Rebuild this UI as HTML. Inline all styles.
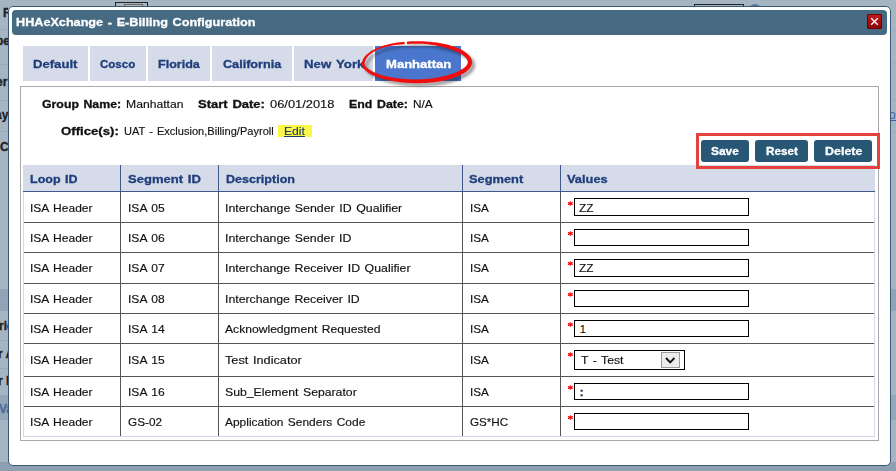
<!DOCTYPE html>
<html><head><meta charset="utf-8"><style>
html,body{margin:0;padding:0}
body{width:896px;height:471px;overflow:hidden;position:relative;background:#a5b5c2;font-family:"Liberation Sans",sans-serif}
.t{position:absolute;white-space:nowrap;transform-origin:0 0}
.b{position:absolute;box-sizing:border-box}
</style></head><body>
<div class="b" style="left:0px;top:289px;width:896px;height:22px;background:#91a3b4"></div>
<div class="b" style="left:0px;top:462px;width:896px;height:9px;background:#8da0b2"></div>
<div class="b" style="left:0px;top:395px;width:896px;height:25px;background:#94a6b7"></div>
<div class="b" style="left:0px;top:29px;width:8px;height:1px;background:#9aabb8"></div>
<div class="b" style="left:0px;top:64px;width:8px;height:1px;background:#9aabb8"></div>
<div class="b" style="left:0px;top:100px;width:8px;height:1px;background:#9aabb8"></div>
<div class="b" style="left:0px;top:131px;width:8px;height:1px;background:#9aabb8"></div>
<div class="b" style="left:0px;top:340px;width:8px;height:1px;background:#9aabb8"></div>
<div class="b" style="left:0px;top:368px;width:8px;height:1px;background:#9aabb8"></div>
<div class="b" style="left:890px;top:30px;width:6px;height:1px;background:#9aabb8"></div>
<div class="b" style="left:890px;top:62px;width:6px;height:1px;background:#9aabb8"></div>
<div class="b" style="left:890px;top:100px;width:6px;height:1px;background:#9aabb8"></div>
<div class="b" style="left:890px;top:131px;width:6px;height:1px;background:#9aabb8"></div>
<div class="b" style="left:115px;top:2px;width:33px;height:5px;border:1px solid #222;background:#a9b5bd;border-bottom:none"></div>
<div class="b" style="left:694px;top:4px;width:50px;height:3px;border:1px solid #222;border-bottom:none"></div>
<div class="b" style="left:750px;top:4px;width:10px;height:6px;border-radius:50%;background:#5d7b98"></div>
<div class="b" style="left:124px;top:4px;width:19px;height:3px;border:1px solid #666;border-bottom:none;background:#b4bcc0"></div>
<div class="b" style="left:0;top:0;width:8px;height:471px;overflow:hidden"><div class="t" style="left:3px;top:5.8px;font-size:12px;line-height:14px;font-weight:bold;color:#222;-webkit-text-stroke:0.35px #222">F</div>
<div class="t" style="left:-4px;top:33.8px;font-size:12px;line-height:14px;font-weight:bold;color:#222;-webkit-text-stroke:0.35px #222">pe</div>
<div class="t" style="left:-4px;top:74.8px;font-size:12px;line-height:14px;font-weight:bold;color:#222;-webkit-text-stroke:0.35px #222">er</div>
<div class="t" style="left:-5px;top:107.8px;font-size:12px;line-height:14px;font-weight:bold;color:#222;-webkit-text-stroke:0.35px #222">ay</div>
<div class="t" style="left:0px;top:139.8px;font-size:12px;line-height:14px;font-weight:bold;color:#222;-webkit-text-stroke:0.35px #222">C</div>
<div class="t" style="left:-1px;top:318.8px;font-size:12px;line-height:14px;font-weight:bold;color:#222;-webkit-text-stroke:0.35px #222">ric</div>
<div class="t" style="left:-2px;top:346.8px;font-size:12px;line-height:14px;font-weight:bold;color:#222;-webkit-text-stroke:0.35px #222">r A</div>
<div class="t" style="left:-2px;top:373.8px;font-size:12px;line-height:14px;font-weight:bold;color:#222;-webkit-text-stroke:0.35px #222">r E</div>
<div class="t" style="left:-1px;top:401.8px;font-size:12px;line-height:14px;font-weight:bold;color:#4d6c9c;-webkit-text-stroke:0.35px #4d6c9c">Va</div>
</div>
<div class="b" style="left:890px;top:0;width:6px;height:471px;overflow:hidden"><div class="t" style="left:-1px;top:107.8px;font-size:12px;line-height:14px;font-weight:normal;color:#3a62a0;-webkit-text-stroke:0px #3a62a0"><u>ol</u></div>
</div>
<div class="b" style="left:8px;top:6px;width:883px;height:460px;border:1px solid #3b5878;background:#fff;border-radius:5px"></div>
<div class="b" style="left:12px;top:10px;width:875px;height:25px;background:#466a82;border-radius:4px"></div>
<div class="t" style="left:16.40px;top:15.69px;font-size:11px;line-height:13px;font-weight:bold;color:#fff;letter-spacing:0px;word-spacing:1.0px;transform:scaleX(1.1491);-webkit-text-stroke:0.3px #fff;">HHAeXchange - E-Billing Configuration</div>
<div class="b" style="left:867px;top:14px;width:15px;height:15px;border-radius:2px;background:linear-gradient(#c41a1a,#8a0606);box-shadow:inset 0 0 0 1px #6a0000"></div>
<svg class="b" style="left:867px;top:14px" width="15" height="15"><path d="M4.2 4.2 L10.8 10.8 M10.8 4.2 L4.2 10.8" stroke="#f2f2f2" stroke-width="1.5"/></svg>
<div class="b" style="left:23px;top:46px;width:65px;height:35px;background:#d5dbe9"></div>
<div class="t" style="left:32.90px;top:57.69px;font-size:11px;line-height:13px;font-weight:bold;color:#1f3e7b;letter-spacing:0px;word-spacing:1.0px;transform:scaleX(1.1910);-webkit-text-stroke:0.3px #1f3e7b;">Default</div>
<div class="b" style="left:90px;top:46px;width:56px;height:35px;background:#d5dbe9"></div>
<div class="t" style="left:99.80px;top:57.69px;font-size:11px;line-height:13px;font-weight:bold;color:#1f3e7b;letter-spacing:0px;word-spacing:1.0px;transform:scaleX(1.0471);-webkit-text-stroke:0.3px #1f3e7b;">Cosco</div>
<div class="b" style="left:148px;top:46px;width:62px;height:35px;background:#d5dbe9"></div>
<div class="t" style="left:158.00px;top:57.69px;font-size:11px;line-height:13px;font-weight:bold;color:#1f3e7b;letter-spacing:0px;word-spacing:1.0px;transform:scaleX(1.1404);-webkit-text-stroke:0.3px #1f3e7b;">Florida</div>
<div class="b" style="left:212px;top:46px;width:80px;height:35px;background:#d5dbe9"></div>
<div class="t" style="left:222.70px;top:57.69px;font-size:11px;line-height:13px;font-weight:bold;color:#1f3e7b;letter-spacing:0px;word-spacing:1.0px;transform:scaleX(1.1474);-webkit-text-stroke:0.3px #1f3e7b;">California</div>
<div class="b" style="left:294px;top:46px;width:79px;height:35px;background:#d5dbe9"></div>
<div class="t" style="left:304.30px;top:57.69px;font-size:11px;line-height:13px;font-weight:bold;color:#1f3e7b;letter-spacing:0px;word-spacing:1.0px;transform:scaleX(1.2067);-webkit-text-stroke:0.3px #1f3e7b;">New York</div>
<div class="b" style="left:375px;top:46px;width:86px;height:35px;background:#4a77cd"></div>
<div class="t" style="left:385.70px;top:57.69px;font-size:11px;line-height:13px;font-weight:bold;color:#fff;letter-spacing:0px;word-spacing:1.0px;transform:scaleX(1.1873);-webkit-text-stroke:0.3px #fff;">Manhattan</div>
<div class="b" style="left:20px;top:86px;width:859px;height:355px;border:1px solid #a8a8a8"></div>
<div class="t" style="left:41.60px;top:97.69px;font-size:11px;line-height:13px;font-weight:bold;color:#111;letter-spacing:0px;word-spacing:1.0px;transform:scaleX(1.1192);-webkit-text-stroke:0.3px #111;">Group Name:</div>
<div class="t" style="left:126.30px;top:97.69px;font-size:11px;line-height:13px;font-weight:normal;color:#111;letter-spacing:0px;word-spacing:1.0px;transform:scaleX(1.1061);-webkit-text-stroke:0.15px #111;">Manhattan</div>
<div class="t" style="left:198.00px;top:97.69px;font-size:11px;line-height:13px;font-weight:bold;color:#111;letter-spacing:0px;word-spacing:1.0px;transform:scaleX(1.1814);-webkit-text-stroke:0.3px #111;">Start Date:</div>
<div class="t" style="left:269.80px;top:97.69px;font-size:11px;line-height:13px;font-weight:normal;color:#111;letter-spacing:0px;word-spacing:1.0px;transform:scaleX(1.1697);-webkit-text-stroke:0.15px #111;">06/01/2018</div>
<div class="t" style="left:348.70px;top:97.69px;font-size:11px;line-height:13px;font-weight:bold;color:#111;letter-spacing:0px;word-spacing:1.0px;transform:scaleX(1.1254);-webkit-text-stroke:0.3px #111;">End Date:</div>
<div class="t" style="left:412.60px;top:97.69px;font-size:11px;line-height:13px;font-weight:normal;color:#111;letter-spacing:0px;word-spacing:1.0px;transform:scaleX(1.0743);-webkit-text-stroke:0.15px #111;">N/A</div>
<div class="t" style="left:61.20px;top:124.69px;font-size:11px;line-height:13px;font-weight:bold;color:#111;letter-spacing:0px;word-spacing:1.0px;transform:scaleX(1.1972);-webkit-text-stroke:0.3px #111;">Office(s):</div>
<div class="b" style="left:278px;top:125px;width:34px;height:12px;background:#fcf84a"></div>
<div class="t" style="left:123.60px;top:124.69px;font-size:11px;line-height:13px;font-weight:normal;color:#111;letter-spacing:0px;word-spacing:1.0px;transform:scaleX(1.0052);-webkit-text-stroke:0.15px #111;">UAT - Exclusion,Billing/Payroll</div>
<div class="t" style="left:284.30px;top:124.69px;font-size:11px;line-height:13px;font-weight:normal;color:#1c3a66;letter-spacing:0px;word-spacing:1.0px;transform:scaleX(1.1027);-webkit-text-stroke:0.15px #1c3a66;text-decoration:underline">Edit</div>
<div class="b" style="left:23px;top:165px;width:852px;height:272px;border:1px solid #d3d9ea"></div>
<div class="b" style="left:23px;top:165px;width:852px;height:26px;background:#d5dbe9"></div>
<div class="b" style="left:23px;top:191px;width:852px;height:1px;background:#3d5a8a"></div>
<div class="b" style="left:120px;top:165px;width:1px;height:26px;background:#3d5a8a"></div>
<div class="b" style="left:120px;top:192px;width:1px;height:244px;background:#555"></div>
<div class="b" style="left:218px;top:165px;width:1px;height:26px;background:#3d5a8a"></div>
<div class="b" style="left:218px;top:192px;width:1px;height:244px;background:#555"></div>
<div class="b" style="left:462px;top:165px;width:1px;height:26px;background:#3d5a8a"></div>
<div class="b" style="left:462px;top:192px;width:1px;height:244px;background:#555"></div>
<div class="b" style="left:560px;top:165px;width:1px;height:26px;background:#3d5a8a"></div>
<div class="b" style="left:560px;top:192px;width:1px;height:244px;background:#555"></div>
<div class="b" style="left:24px;top:222px;width:850px;height:1px;background:#555"></div>
<div class="b" style="left:24px;top:252px;width:850px;height:1px;background:#555"></div>
<div class="b" style="left:24px;top:283px;width:850px;height:1px;background:#555"></div>
<div class="b" style="left:24px;top:313px;width:850px;height:1px;background:#555"></div>
<div class="b" style="left:24px;top:343px;width:850px;height:1px;background:#555"></div>
<div class="b" style="left:24px;top:376px;width:850px;height:1px;background:#555"></div>
<div class="b" style="left:24px;top:406px;width:850px;height:1px;background:#555"></div>
<div class="t" style="left:30.10px;top:172.69px;font-size:11px;line-height:13px;font-weight:bold;color:#1f3e7b;letter-spacing:0px;word-spacing:1.0px;transform:scaleX(1.1352);-webkit-text-stroke:0.3px #1f3e7b;">Loop ID</div>
<div class="t" style="left:127.60px;top:172.69px;font-size:11px;line-height:13px;font-weight:bold;color:#1f3e7b;letter-spacing:0px;word-spacing:1.0px;transform:scaleX(1.1835);-webkit-text-stroke:0.3px #1f3e7b;">Segment ID</div>
<div class="t" style="left:225.80px;top:172.69px;font-size:11px;line-height:13px;font-weight:bold;color:#1f3e7b;letter-spacing:0px;word-spacing:1.0px;transform:scaleX(1.1403);-webkit-text-stroke:0.3px #1f3e7b;">Description</div>
<div class="t" style="left:469.20px;top:172.69px;font-size:11px;line-height:13px;font-weight:bold;color:#1f3e7b;letter-spacing:0px;word-spacing:1.0px;transform:scaleX(1.1668);-webkit-text-stroke:0.3px #1f3e7b;">Segment</div>
<div class="t" style="left:567.30px;top:172.69px;font-size:11px;line-height:13px;font-weight:bold;color:#1f3e7b;letter-spacing:0px;word-spacing:1.0px;transform:scaleX(1.1676);-webkit-text-stroke:0.3px #1f3e7b;">Values</div>
<div class="t" style="left:30.10px;top:201.69px;font-size:11px;line-height:13px;font-weight:normal;color:#111;letter-spacing:0px;word-spacing:1.0px;transform:scaleX(1.0916);-webkit-text-stroke:0.15px #111;">ISA Header</div>
<div class="t" style="left:127.60px;top:201.69px;font-size:11px;line-height:13px;font-weight:normal;color:#111;letter-spacing:0px;word-spacing:1.0px;transform:scaleX(1.0953);-webkit-text-stroke:0.15px #111;">ISA 05</div>
<div class="t" style="left:225.00px;top:201.69px;font-size:11px;line-height:13px;font-weight:normal;color:#111;letter-spacing:0px;word-spacing:1.0px;transform:scaleX(1.1236);-webkit-text-stroke:0.15px #111;">Interchange Sender ID Qualifier</div>
<div class="t" style="left:469.60px;top:201.69px;font-size:11px;line-height:13px;font-weight:normal;color:#111;letter-spacing:0px;word-spacing:1.0px;transform:scaleX(1.0659);-webkit-text-stroke:0.15px #111;">ISA</div>
<svg class="b" style="left:564px;top:200px" width="12" height="8"><path d="M6.4 1.1 V5.9" stroke="#ff5050" stroke-width="1.1"/><path d="M4.6 2.6 L8.2 4.4 M8.2 2.6 L4.6 4.4" stroke="#ff0000" stroke-width="1.3" stroke-linecap="round"/></svg>
<div class="b" style="left:574px;top:198px;width:175px;height:18px;border:1px solid #000;background:#fff"></div>
<div class="t" style="left:579.10px;top:201.69px;font-size:11px;line-height:13px;font-weight:normal;color:#111;letter-spacing:0px;word-spacing:1.0px;transform:scaleX(1.0713);-webkit-text-stroke:0.15px #111;">ZZ</div>
<div class="t" style="left:30.10px;top:231.69px;font-size:11px;line-height:13px;font-weight:normal;color:#111;letter-spacing:0px;word-spacing:1.0px;transform:scaleX(1.0916);-webkit-text-stroke:0.15px #111;">ISA Header</div>
<div class="t" style="left:127.60px;top:231.69px;font-size:11px;line-height:13px;font-weight:normal;color:#111;letter-spacing:0px;word-spacing:1.0px;transform:scaleX(1.0953);-webkit-text-stroke:0.15px #111;">ISA 06</div>
<div class="t" style="left:225.00px;top:231.69px;font-size:11px;line-height:13px;font-weight:normal;color:#111;letter-spacing:0px;word-spacing:1.0px;transform:scaleX(1.1217);-webkit-text-stroke:0.15px #111;">Interchange Sender ID</div>
<div class="t" style="left:469.60px;top:231.69px;font-size:11px;line-height:13px;font-weight:normal;color:#111;letter-spacing:0px;word-spacing:1.0px;transform:scaleX(1.0659);-webkit-text-stroke:0.15px #111;">ISA</div>
<svg class="b" style="left:564px;top:230px" width="12" height="8"><path d="M6.4 1.1 V5.9" stroke="#ff5050" stroke-width="1.1"/><path d="M4.6 2.6 L8.2 4.4 M8.2 2.6 L4.6 4.4" stroke="#ff0000" stroke-width="1.3" stroke-linecap="round"/></svg>
<div class="b" style="left:574px;top:229px;width:175px;height:17px;border:1px solid #000;background:#fff"></div>
<div class="t" style="left:30.10px;top:261.69px;font-size:11px;line-height:13px;font-weight:normal;color:#111;letter-spacing:0px;word-spacing:1.0px;transform:scaleX(1.0916);-webkit-text-stroke:0.15px #111;">ISA Header</div>
<div class="t" style="left:127.60px;top:261.69px;font-size:11px;line-height:13px;font-weight:normal;color:#111;letter-spacing:0px;word-spacing:1.0px;transform:scaleX(1.0953);-webkit-text-stroke:0.15px #111;">ISA 07</div>
<div class="t" style="left:225.00px;top:261.69px;font-size:11px;line-height:13px;font-weight:normal;color:#111;letter-spacing:0px;word-spacing:1.0px;transform:scaleX(1.1199);-webkit-text-stroke:0.15px #111;">Interchange Receiver ID Qualifier</div>
<div class="t" style="left:469.60px;top:261.69px;font-size:11px;line-height:13px;font-weight:normal;color:#111;letter-spacing:0px;word-spacing:1.0px;transform:scaleX(1.0659);-webkit-text-stroke:0.15px #111;">ISA</div>
<svg class="b" style="left:564px;top:260px" width="12" height="8"><path d="M6.4 1.1 V5.9" stroke="#ff5050" stroke-width="1.1"/><path d="M4.6 2.6 L8.2 4.4 M8.2 2.6 L4.6 4.4" stroke="#ff0000" stroke-width="1.3" stroke-linecap="round"/></svg>
<div class="b" style="left:574px;top:259px;width:175px;height:18px;border:1px solid #000;background:#fff"></div>
<div class="t" style="left:579.10px;top:261.69px;font-size:11px;line-height:13px;font-weight:normal;color:#111;letter-spacing:0px;word-spacing:1.0px;transform:scaleX(1.0713);-webkit-text-stroke:0.15px #111;">ZZ</div>
<div class="t" style="left:30.10px;top:292.69px;font-size:11px;line-height:13px;font-weight:normal;color:#111;letter-spacing:0px;word-spacing:1.0px;transform:scaleX(1.0916);-webkit-text-stroke:0.15px #111;">ISA Header</div>
<div class="t" style="left:127.60px;top:292.69px;font-size:11px;line-height:13px;font-weight:normal;color:#111;letter-spacing:0px;word-spacing:1.0px;transform:scaleX(1.0953);-webkit-text-stroke:0.15px #111;">ISA 08</div>
<div class="t" style="left:225.00px;top:292.69px;font-size:11px;line-height:13px;font-weight:normal;color:#111;letter-spacing:0px;word-spacing:1.0px;transform:scaleX(1.1168);-webkit-text-stroke:0.15px #111;">Interchange Receiver ID</div>
<div class="t" style="left:469.60px;top:292.69px;font-size:11px;line-height:13px;font-weight:normal;color:#111;letter-spacing:0px;word-spacing:1.0px;transform:scaleX(1.0659);-webkit-text-stroke:0.15px #111;">ISA</div>
<svg class="b" style="left:564px;top:291px" width="12" height="8"><path d="M6.4 1.1 V5.9" stroke="#ff5050" stroke-width="1.1"/><path d="M4.6 2.6 L8.2 4.4 M8.2 2.6 L4.6 4.4" stroke="#ff0000" stroke-width="1.3" stroke-linecap="round"/></svg>
<div class="b" style="left:574px;top:290px;width:175px;height:17px;border:1px solid #000;background:#fff"></div>
<div class="t" style="left:30.10px;top:322.69px;font-size:11px;line-height:13px;font-weight:normal;color:#111;letter-spacing:0px;word-spacing:1.0px;transform:scaleX(1.0916);-webkit-text-stroke:0.15px #111;">ISA Header</div>
<div class="t" style="left:127.60px;top:322.69px;font-size:11px;line-height:13px;font-weight:normal;color:#111;letter-spacing:0px;word-spacing:1.0px;transform:scaleX(1.0953);-webkit-text-stroke:0.15px #111;">ISA 14</div>
<div class="t" style="left:225.00px;top:322.69px;font-size:11px;line-height:13px;font-weight:normal;color:#111;letter-spacing:0px;word-spacing:1.0px;transform:scaleX(1.1019);-webkit-text-stroke:0.15px #111;">Acknowledgment Requested</div>
<div class="t" style="left:469.60px;top:322.69px;font-size:11px;line-height:13px;font-weight:normal;color:#111;letter-spacing:0px;word-spacing:1.0px;transform:scaleX(1.0659);-webkit-text-stroke:0.15px #111;">ISA</div>
<svg class="b" style="left:564px;top:321px" width="12" height="8"><path d="M6.4 1.1 V5.9" stroke="#ff5050" stroke-width="1.1"/><path d="M4.6 2.6 L8.2 4.4 M8.2 2.6 L4.6 4.4" stroke="#ff0000" stroke-width="1.3" stroke-linecap="round"/></svg>
<div class="b" style="left:574px;top:320px;width:175px;height:17px;border:1px solid #000;background:#fff"></div>
<div class="t" style="left:579.80px;top:322.69px;font-size:11px;line-height:13px;font-weight:normal;color:#111;letter-spacing:0px;word-spacing:1.0px;transform:scaleX(1.0000);-webkit-text-stroke:0.15px #111;">1</div>
<div class="t" style="left:30.10px;top:353.69px;font-size:11px;line-height:13px;font-weight:normal;color:#111;letter-spacing:0px;word-spacing:1.0px;transform:scaleX(1.0916);-webkit-text-stroke:0.15px #111;">ISA Header</div>
<div class="t" style="left:127.60px;top:353.69px;font-size:11px;line-height:13px;font-weight:normal;color:#111;letter-spacing:0px;word-spacing:1.0px;transform:scaleX(1.0953);-webkit-text-stroke:0.15px #111;">ISA 15</div>
<div class="t" style="left:225.00px;top:353.69px;font-size:11px;line-height:13px;font-weight:normal;color:#111;letter-spacing:0px;word-spacing:1.0px;transform:scaleX(1.1548);-webkit-text-stroke:0.15px #111;">Test Indicator</div>
<div class="t" style="left:469.60px;top:353.69px;font-size:11px;line-height:13px;font-weight:normal;color:#111;letter-spacing:0px;word-spacing:1.0px;transform:scaleX(1.0659);-webkit-text-stroke:0.15px #111;">ISA</div>
<svg class="b" style="left:564px;top:351px" width="12" height="8"><path d="M6.4 1.1 V5.9" stroke="#ff5050" stroke-width="1.1"/><path d="M4.6 2.6 L8.2 4.4 M8.2 2.6 L4.6 4.4" stroke="#ff0000" stroke-width="1.3" stroke-linecap="round"/></svg>
<div class="b" style="left:574px;top:350px;width:111px;height:20px;border:1px solid #000;background:#fff"></div>
<div class="b" style="left:661px;top:352px;width:19px;height:16px;border:1px solid #9a9a9a;background:#ececec"></div>
<svg class="b" style="left:661px;top:352px" width="19" height="16"><path d="M5 6 L9.2 10.3 L13.4 6" stroke="#111" stroke-width="1.9" fill="none"/></svg>
<div class="t" style="left:581.00px;top:353.69px;font-size:11px;line-height:13px;font-weight:normal;color:#111;letter-spacing:0px;word-spacing:1.0px;transform:scaleX(1.1106);-webkit-text-stroke:0.15px #111;">T - Test</div>
<div class="t" style="left:30.10px;top:385.69px;font-size:11px;line-height:13px;font-weight:normal;color:#111;letter-spacing:0px;word-spacing:1.0px;transform:scaleX(1.0916);-webkit-text-stroke:0.15px #111;">ISA Header</div>
<div class="t" style="left:127.60px;top:385.69px;font-size:11px;line-height:13px;font-weight:normal;color:#111;letter-spacing:0px;word-spacing:1.0px;transform:scaleX(1.0953);-webkit-text-stroke:0.15px #111;">ISA 16</div>
<div class="t" style="left:225.00px;top:385.69px;font-size:11px;line-height:13px;font-weight:normal;color:#111;letter-spacing:0px;word-spacing:1.0px;transform:scaleX(1.1123);-webkit-text-stroke:0.15px #111;">Sub_Element Separator</div>
<div class="t" style="left:469.60px;top:385.69px;font-size:11px;line-height:13px;font-weight:normal;color:#111;letter-spacing:0px;word-spacing:1.0px;transform:scaleX(1.0659);-webkit-text-stroke:0.15px #111;">ISA</div>
<svg class="b" style="left:564px;top:384px" width="12" height="8"><path d="M6.4 1.1 V5.9" stroke="#ff5050" stroke-width="1.1"/><path d="M4.6 2.6 L8.2 4.4 M8.2 2.6 L4.6 4.4" stroke="#ff0000" stroke-width="1.3" stroke-linecap="round"/></svg>
<div class="b" style="left:574px;top:383px;width:175px;height:17px;border:1px solid #000;background:#fff"></div>
<div class="t" style="left:579.80px;top:385.69px;font-size:11px;line-height:13px;font-weight:bold;color:#111;letter-spacing:0px;word-spacing:1.0px;transform:scaleX(1.0000);-webkit-text-stroke:0.3px #111;">:</div>
<div class="t" style="left:30.10px;top:415.69px;font-size:11px;line-height:13px;font-weight:normal;color:#111;letter-spacing:0px;word-spacing:1.0px;transform:scaleX(1.0916);-webkit-text-stroke:0.15px #111;">ISA Header</div>
<div class="t" style="left:127.60px;top:415.69px;font-size:11px;line-height:13px;font-weight:normal;color:#111;letter-spacing:0px;word-spacing:1.0px;transform:scaleX(1.0727);-webkit-text-stroke:0.15px #111;">GS-02</div>
<div class="t" style="left:225.00px;top:415.69px;font-size:11px;line-height:13px;font-weight:normal;color:#111;letter-spacing:0px;word-spacing:1.0px;transform:scaleX(1.0860);-webkit-text-stroke:0.15px #111;">Application Senders Code</div>
<div class="t" style="left:469.60px;top:415.69px;font-size:11px;line-height:13px;font-weight:normal;color:#111;letter-spacing:0px;word-spacing:1.0px;transform:scaleX(1.0594);-webkit-text-stroke:0.15px #111;">GS*HC</div>
<svg class="b" style="left:564px;top:414px" width="12" height="8"><path d="M6.4 1.1 V5.9" stroke="#ff5050" stroke-width="1.1"/><path d="M4.6 2.6 L8.2 4.4 M8.2 2.6 L4.6 4.4" stroke="#ff0000" stroke-width="1.3" stroke-linecap="round"/></svg>
<div class="b" style="left:574px;top:413px;width:175px;height:17px;border:1px solid #000;background:#fff"></div>
<div class="b" style="left:701px;top:140px;width:48px;height:22px;background:#285775;border-radius:3px"></div>
<div class="t" style="left:711.00px;top:144.69px;font-size:11px;line-height:13px;font-weight:bold;color:#fff;letter-spacing:0px;word-spacing:1.0px;transform:scaleX(1.0862);-webkit-text-stroke:0.3px #fff;">Save</div>
<div class="b" style="left:755px;top:140px;width:53px;height:22px;background:#285775;border-radius:3px"></div>
<div class="t" style="left:765.90px;top:144.69px;font-size:11px;line-height:13px;font-weight:bold;color:#fff;letter-spacing:0px;word-spacing:1.0px;transform:scaleX(1.0613);-webkit-text-stroke:0.3px #fff;">Reset</div>
<div class="b" style="left:814px;top:140px;width:58px;height:22px;background:#285775;border-radius:3px"></div>
<div class="t" style="left:824.50px;top:144.69px;font-size:11px;line-height:13px;font-weight:bold;color:#fff;letter-spacing:0px;word-spacing:1.0px;transform:scaleX(1.1330);-webkit-text-stroke:0.3px #fff;">Delete</div>
<div class="b" style="left:696px;top:133px;width:184px;height:36px;border:3px solid #e5413d"></div>
<svg class="b" style="left:340px;top:30px" width="160" height="70"><defs><filter id="sh" x="-20%" y="-40%" width="140%" height="180%"><feGaussianBlur stdDeviation="1.6"/></filter></defs><path d="M132.00,32.20 L131.92,33.30 L131.70,34.40 L131.32,35.49 L130.80,36.57 L130.13,37.64 L129.31,38.69 L128.35,39.73 L127.25,40.74 L126.01,41.73 L124.63,42.70 L123.13,43.64 L121.50,44.54 L119.74,45.42 L117.87,46.25 L115.89,47.05 L113.80,47.81 L111.61,48.52 L109.33,49.19 L106.96,49.81 L104.50,50.39 L101.97,50.91 L99.37,51.38 L96.71,51.81 L94.00,52.17 L91.24,52.48 L88.44,52.74 L85.60,52.94 L82.75,53.08 L79.88,53.17 L77.00,53.20 L74.12,53.17 L71.25,53.09 L68.40,52.94 L65.56,52.74 L62.76,52.49 L60.00,52.18 L57.29,51.82 L54.63,51.42 L52.03,50.96 L49.50,50.46 L47.04,49.92 L44.67,49.33 L42.39,48.71 L40.20,48.05 L38.11,47.35 L36.13,46.62 L34.26,45.85 L32.50,45.06 L30.87,44.23 L29.37,43.38 L27.99,42.49 L26.75,41.58 L25.65,40.64 L24.69,39.67 L23.87,38.68 L23.20,37.66 L22.68,36.63 L22.30,35.57 L22.08,34.49 L22.00,33.40 L22.08,32.29 L22.30,31.18 L22.68,30.06 L23.20,28.93 L23.87,27.81 L24.69,26.69 L25.65,25.59 L26.75,24.49 L27.99,23.42 L29.37,22.38 L30.87,21.36 L32.50,20.37 L34.26,19.42 L36.13,18.51 L38.11,17.65 L40.20,16.83 L42.39,16.07 L44.67,15.35 L47.04,14.69 L49.50,14.09 L52.03,13.54 L54.63,13.05 L57.29,12.61 L60.00,12.24 L62.76,11.92 L65.56,11.66 L68.40,11.46 L71.25,11.32 L74.12,11.23 L77.00,11.20 L79.88,11.23 L82.75,11.32 L85.60,11.46 L88.44,11.66 L91.24,11.92 L94.00,12.23 L96.71,12.59 L99.37,13.02 L101.97,13.49 L104.50,14.01 L106.96,14.59 L109.33,15.21 L111.61,15.88 L113.80,16.59 L115.89,17.35 L117.87,18.15 L119.74,18.98 L121.50,19.86 L123.13,20.76 L124.63,21.70 L126.01,22.67 L127.25,23.66 L128.35,24.67 L129.31,25.71 L130.13,26.76 L130.80,27.83 L131.32,28.91 L131.70,30.00 L131.92,31.10 Z M127.77,31.67 L127.67,31.11 L127.49,30.51 L127.20,29.84 L126.79,29.11 L126.24,28.32 L125.54,27.49 L124.69,26.64 L123.68,25.77 L122.52,24.89 L121.21,24.02 L119.75,23.17 L118.16,22.35 L116.43,21.56 L114.57,20.81 L112.60,20.08 L110.53,19.37 L108.37,18.67 L106.11,17.99 L103.77,17.33 L101.34,16.71 L98.84,16.13 L96.27,15.60 L93.64,15.12 L90.95,14.70 L88.22,14.35 L85.45,14.07 L82.65,13.86 L79.83,13.74 L77.00,13.70 L74.17,13.72 L71.35,13.78 L68.54,13.88 L65.76,14.02 L63.00,14.21 L60.28,14.45 L57.60,14.73 L54.97,15.08 L52.41,15.48 L49.91,15.94 L47.49,16.47 L45.15,17.07 L42.90,17.73 L40.75,18.45 L38.72,19.24 L36.79,20.09 L35.00,21.00 L33.34,21.96 L31.82,22.96 L30.44,24.00 L29.22,25.06 L28.15,26.12 L27.24,27.18 L26.49,28.22 L25.88,29.22 L25.42,30.17 L25.08,31.05 L24.86,31.88 L24.74,32.66 L24.70,33.40 L24.76,34.12 L24.93,34.85 L25.22,35.57 L25.63,36.31 L26.19,37.06 L26.88,37.81 L27.72,38.56 L28.69,39.32 L29.81,40.07 L31.06,40.81 L32.45,41.54 L33.97,42.27 L35.61,42.98 L37.37,43.68 L39.25,44.36 L41.24,45.01 L43.34,45.63 L45.54,46.19 L47.84,46.72 L50.22,47.19 L52.68,47.62 L55.21,48.00 L57.80,48.33 L60.45,48.62 L63.14,48.86 L65.86,49.05 L68.62,49.21 L71.40,49.31 L74.20,49.38 L77.00,49.40 L79.80,49.37 L82.60,49.26 L85.37,49.09 L88.12,48.85 L90.83,48.55 L93.50,48.20 L96.12,47.78 L98.68,47.31 L101.17,46.80 L103.59,46.24 L105.92,45.64 L108.17,45.00 L110.32,44.34 L112.37,43.65 L114.32,42.94 L116.16,42.20 L117.87,41.44 L119.46,40.67 L120.91,39.87 L122.23,39.07 L123.41,38.27 L124.44,37.47 L125.32,36.68 L126.06,35.92 L126.65,35.19 L127.10,34.51 L127.43,33.87 L127.64,33.28 L127.76,32.73 L127.80,32.20 Z " fill="#000" fill-rule="evenodd" opacity="0.4" filter="url(#sh)" transform="translate(3,3)"/><path d="M132.00,32.20 L131.92,33.30 L131.70,34.40 L131.32,35.49 L130.80,36.57 L130.13,37.64 L129.31,38.69 L128.35,39.73 L127.25,40.74 L126.01,41.73 L124.63,42.70 L123.13,43.64 L121.50,44.54 L119.74,45.42 L117.87,46.25 L115.89,47.05 L113.80,47.81 L111.61,48.52 L109.33,49.19 L106.96,49.81 L104.50,50.39 L101.97,50.91 L99.37,51.38 L96.71,51.81 L94.00,52.17 L91.24,52.48 L88.44,52.74 L85.60,52.94 L82.75,53.08 L79.88,53.17 L77.00,53.20 L74.12,53.17 L71.25,53.09 L68.40,52.94 L65.56,52.74 L62.76,52.49 L60.00,52.18 L57.29,51.82 L54.63,51.42 L52.03,50.96 L49.50,50.46 L47.04,49.92 L44.67,49.33 L42.39,48.71 L40.20,48.05 L38.11,47.35 L36.13,46.62 L34.26,45.85 L32.50,45.06 L30.87,44.23 L29.37,43.38 L27.99,42.49 L26.75,41.58 L25.65,40.64 L24.69,39.67 L23.87,38.68 L23.20,37.66 L22.68,36.63 L22.30,35.57 L22.08,34.49 L22.00,33.40 L22.08,32.29 L22.30,31.18 L22.68,30.06 L23.20,28.93 L23.87,27.81 L24.69,26.69 L25.65,25.59 L26.75,24.49 L27.99,23.42 L29.37,22.38 L30.87,21.36 L32.50,20.37 L34.26,19.42 L36.13,18.51 L38.11,17.65 L40.20,16.83 L42.39,16.07 L44.67,15.35 L47.04,14.69 L49.50,14.09 L52.03,13.54 L54.63,13.05 L57.29,12.61 L60.00,12.24 L62.76,11.92 L65.56,11.66 L68.40,11.46 L71.25,11.32 L74.12,11.23 L77.00,11.20 L79.88,11.23 L82.75,11.32 L85.60,11.46 L88.44,11.66 L91.24,11.92 L94.00,12.23 L96.71,12.59 L99.37,13.02 L101.97,13.49 L104.50,14.01 L106.96,14.59 L109.33,15.21 L111.61,15.88 L113.80,16.59 L115.89,17.35 L117.87,18.15 L119.74,18.98 L121.50,19.86 L123.13,20.76 L124.63,21.70 L126.01,22.67 L127.25,23.66 L128.35,24.67 L129.31,25.71 L130.13,26.76 L130.80,27.83 L131.32,28.91 L131.70,30.00 L131.92,31.10 Z M127.77,31.67 L127.67,31.11 L127.49,30.51 L127.20,29.84 L126.79,29.11 L126.24,28.32 L125.54,27.49 L124.69,26.64 L123.68,25.77 L122.52,24.89 L121.21,24.02 L119.75,23.17 L118.16,22.35 L116.43,21.56 L114.57,20.81 L112.60,20.08 L110.53,19.37 L108.37,18.67 L106.11,17.99 L103.77,17.33 L101.34,16.71 L98.84,16.13 L96.27,15.60 L93.64,15.12 L90.95,14.70 L88.22,14.35 L85.45,14.07 L82.65,13.86 L79.83,13.74 L77.00,13.70 L74.17,13.72 L71.35,13.78 L68.54,13.88 L65.76,14.02 L63.00,14.21 L60.28,14.45 L57.60,14.73 L54.97,15.08 L52.41,15.48 L49.91,15.94 L47.49,16.47 L45.15,17.07 L42.90,17.73 L40.75,18.45 L38.72,19.24 L36.79,20.09 L35.00,21.00 L33.34,21.96 L31.82,22.96 L30.44,24.00 L29.22,25.06 L28.15,26.12 L27.24,27.18 L26.49,28.22 L25.88,29.22 L25.42,30.17 L25.08,31.05 L24.86,31.88 L24.74,32.66 L24.70,33.40 L24.76,34.12 L24.93,34.85 L25.22,35.57 L25.63,36.31 L26.19,37.06 L26.88,37.81 L27.72,38.56 L28.69,39.32 L29.81,40.07 L31.06,40.81 L32.45,41.54 L33.97,42.27 L35.61,42.98 L37.37,43.68 L39.25,44.36 L41.24,45.01 L43.34,45.63 L45.54,46.19 L47.84,46.72 L50.22,47.19 L52.68,47.62 L55.21,48.00 L57.80,48.33 L60.45,48.62 L63.14,48.86 L65.86,49.05 L68.62,49.21 L71.40,49.31 L74.20,49.38 L77.00,49.40 L79.80,49.37 L82.60,49.26 L85.37,49.09 L88.12,48.85 L90.83,48.55 L93.50,48.20 L96.12,47.78 L98.68,47.31 L101.17,46.80 L103.59,46.24 L105.92,45.64 L108.17,45.00 L110.32,44.34 L112.37,43.65 L114.32,42.94 L116.16,42.20 L117.87,41.44 L119.46,40.67 L120.91,39.87 L122.23,39.07 L123.41,38.27 L124.44,37.47 L125.32,36.68 L126.06,35.92 L126.65,35.19 L127.10,34.51 L127.43,33.87 L127.64,33.28 L127.76,32.73 L127.80,32.20 Z " fill="#f20d0d" fill-rule="evenodd"/><rect x="64.6" y="10" width="2.4" height="5" fill="#fff"/></svg>
</body></html>
